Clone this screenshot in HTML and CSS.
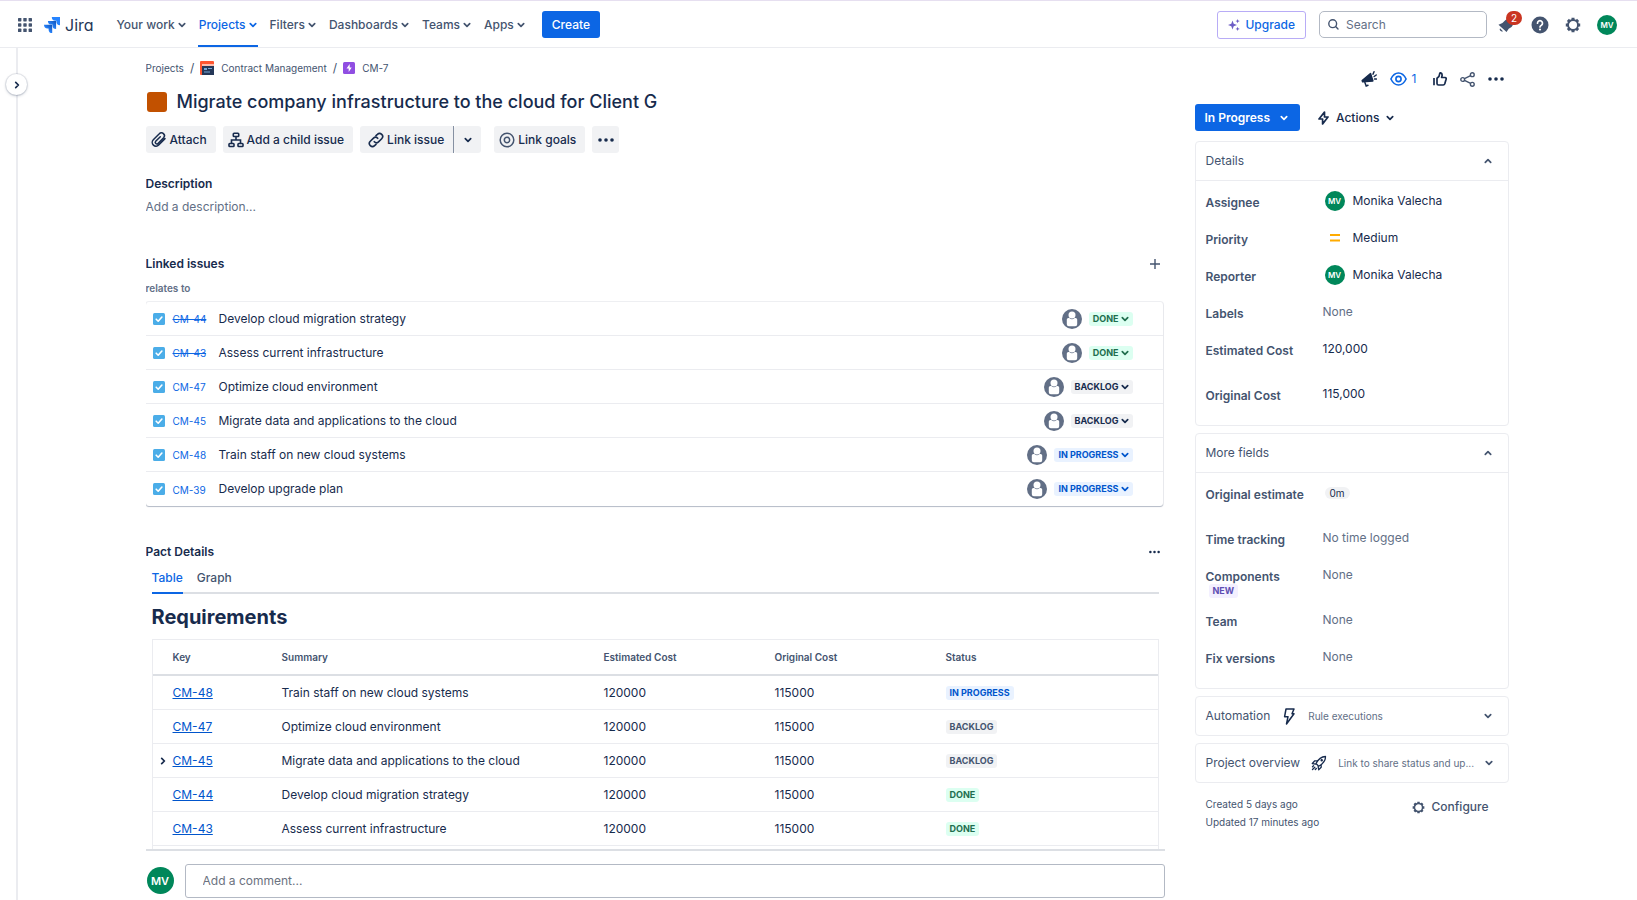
FILE: index.html
```
<!DOCTYPE html>
<html lang="en">

<head>
    <meta charset="UTF-8">
    <meta name="viewport" content="width=device-width, initial-scale=1.0">
    <title>CM-7 Migrate company infrastructure to the cloud for Client G</title>
    <link rel="stylesheet" href="styles.css">
</head>

<body>
    <!-- Shared icons -->
    <svg class="sprite" aria-hidden="true">
        <symbol id="chevron" viewBox="0 0 8 8">
            <path d="M1.3 2.7 4 5.400 6.700 2.700" fill="none" stroke="currentColor" stroke-width="1.7" stroke-linecap="round" stroke-linejoin="round" />
        </symbol>
        <symbol id="dots" viewBox="0 0 16 4">
            <circle cx="2" cy="2" r="1.8" fill="currentColor" />
            <circle cx="8" cy="2" r="1.8" fill="currentColor" />
            <circle cx="14" cy="2" r="1.8" fill="currentColor" />
        </symbol>
        <symbol id="gear" viewBox="0 0 16 16">
            <circle cx="8" cy="8" r="5" fill="none" stroke="currentColor" stroke-width="1.9" />
            <g stroke="currentColor" stroke-width="3">
                <path d="M8 .8V3M8 13v2.200M.8 8H3M13 8h2.200M2.900 2.900l1.600 1.600M11.500 11.500l1.600 1.600M13.100 2.900l-1.600 1.600M4.500 11.500l-1.600 1.600" />
            </g>
        </symbol>
        <symbol id="task" viewBox="0 0 12 12">
            <rect width="12" height="12" rx="1.5" fill="#4bade8" />
            <path d="M3.2 6.2 5.2 8.2 8.9 4" fill="none" stroke="#fff" stroke-width="1.6" stroke-linecap="round" stroke-linejoin="round" />
        </symbol>
        <symbol id="person" viewBox="0 0 20 20">
            <circle cx="10" cy="10" r="10" fill="#626f86" />
            <circle cx="10" cy="6" r="3.5" fill="#fff" />
            <path d="M4.8 10.6q0-1.6 1.6-1.6h.9a4 4 0 0 0 5.4 0h.9q1.6 0 1.6 1.6v4.6q0 2-2 2H6.800q-2 0-2-2z" fill="#fff" />
        </symbol>
    </svg>

    <header class="navbar">
        <button class="icon-btn" aria-label="Switch to">
            <svg width="14" height="14" viewBox="0 0 14 14" fill="currentColor">
                <rect width="3.4" height="3.4" rx=".6" /><rect x="5.3" width="3.4" height="3.4" rx=".6" /><rect x="10.6" width="3.4" height="3.4" rx=".6" />
                <rect y="5.3" width="3.4" height="3.4" rx=".6" /><rect x="5.3" y="5.3" width="3.4" height="3.4" rx=".6" /><rect x="10.6" y="5.3" width="3.4" height="3.4" rx=".6" />
                <rect y="10.6" width="3.4" height="3.4" rx=".6" /><rect x="5.3" y="10.6" width="3.4" height="3.4" rx=".6" /><rect x="10.6" y="10.6" width="3.4" height="3.4" rx=".6" />
            </svg>
        </button>
        <a class="logo" href="#">
            <svg width="16" height="16" viewBox="0 0 16 16">
                <defs>
                    <linearGradient id="fold" x1="1" y1="0" x2="0" y2="1">
                        <stop offset=".1" stop-color="#1558bc" />
                        <stop offset=".6" stop-color="#2684ff" />
                    </linearGradient>
                </defs>
                <path d="M7.8 0H16v8.2a3.6 3.6 0 0 1-3.6-3.6V3.7h-1A3.6 3.6 0 0 1 7.8 0z" fill="#2684ff" />
                <path d="M3.9 3.9h8.2v8.2a3.6 3.6 0 0 1-3.6-3.6v-1h-1a3.6 3.6 0 0 1-3.6-3.6z" fill="url(#fold)" />
                <path d="M0 7.8h8.2V16a3.6 3.6 0 0 1-3.6-3.6v-1h-1A3.6 3.6 0 0 1 0 7.8z" fill="url(#fold)" />
            </svg>
            <span>Jira</span>
        </a>
        <nav class="menu">
            <button>Your work <svg class="chev"><use href="#chevron" /></svg></button>
            <button class="active">Projects <svg class="chev"><use href="#chevron" /></svg></button>
            <button>Filters <svg class="chev"><use href="#chevron" /></svg></button>
            <button>Dashboards <svg class="chev"><use href="#chevron" /></svg></button>
            <button>Teams <svg class="chev"><use href="#chevron" /></svg></button>
            <button>Apps <svg class="chev"><use href="#chevron" /></svg></button>
        </nav>
        <button class="create">Create</button>

        <div class="tools">
            <button class="upgrade">
                <svg width="12" height="12" viewBox="0 0 12 12" fill="#6e5dc6">
                    <path d="M4.5 1.5 5.7 4.8 9 6 5.7 7.2 4.5 10.5 3.3 7.2 0 6l3.3-1.2z" />
                    <path d="M9.6 0l.6 1.5 1.6.6-1.6.6-.6 1.5L9 2.7l-1.5-.6L9 1.5zM9.6 7.8l.6 1.5 1.6.6-1.6.6-.6 1.5-.6-1.5-1.5-.6L9 9.3z" />
                </svg>
                Upgrade
            </button>
            <label class="search">
                <svg width="11" height="11" viewBox="0 0 11 11" fill="none" stroke="currentColor" stroke-width="1.4" stroke-linecap="round">
                    <circle cx="4.7" cy="4.7" r="3.9" /><path d="M7.6 7.6 10 10" />
                </svg>
                <input type="search" placeholder="Search" aria-label="Search">
            </label>
            <button class="icon-btn bell" aria-label="Notifications">
                <svg width="18" height="18" viewBox="0 0 18 18" fill="currentColor">
                    <path d="M1.500 8.800Q6 7.500 8 4.500a4.600 4.600 0 0 1 6.500 6.500Q11.500 12 9.500 16z" />
                    <path d="M3 12.200a2.200 2.200 0 0 0 3 3z" />
                </svg>
                <span class="count">2</span>
            </button>
            <button class="icon-btn" aria-label="Help">
                <svg width="18" height="18" viewBox="0 0 18 18">
                    <circle cx="9" cy="9" r="8.5" fill="currentColor" />
                    <path d="M6.5 7.2a2.5 2.5 0 1 1 3.9 2.1Q9 10.2 9 11" fill="none" stroke="#fff" stroke-width="1.7" stroke-linecap="round" />
                    <circle cx="9" cy="13.5" r="1.1" fill="#fff" />
                </svg>
            </button>
            <button class="icon-btn" aria-label="Settings">
                <svg width="16" height="16"><use href="#gear" /></svg>
            </button>
            <button class="avatar" aria-label="Your profile">MV</button>
        </div>
    </header>

    <div class="layout">
        <aside class="rail">
            <button class="expand" aria-label="Expand sidebar"><svg class="chev right"><use href="#chevron" /></svg></button>
        </aside>

        <div class="issue">
            <main class="content">
                <div class="scroll">
                    <nav class="breadcrumb">
                        <a href="#">Projects</a>
                        <span>/</span>
                        <a href="#">
                            <svg width="14" height="14" viewBox="0 0 14 14">
                                <rect width="14" height="14" rx="1" fill="#ff5630" />
                                <path d="M2 3h12v11H2z" fill="#253858" /><path d="M2 3h12v2H2z" fill="#ffbdad" />
                                <path d="M4 7h3v2H4zM8 7h4v1H8zM4 10.5h6v1H4z" fill="#79a8d8" />
                            </svg>
                            Contract Management
                        </a>
                        <span>/</span>
                        <a href="#">
                            <svg width="12" height="12" viewBox="0 0 12 12">
                                <rect width="12" height="12" rx="1.5" fill="#904ee2" />
                                <path d="M6.7 2 3.5 6.4h2.2V10l3-4.4h-2z" fill="#fff" />
                            </svg>
                            CM-7
                        </a>
                    </nav>

                    <h1><span class="color-box"></span>Migrate company infrastructure to the cloud for Client G</h1>

                    <div class="toolbar">
                        <button>
                            <svg width="16" height="16" viewBox="0 0 16 16" fill="none" stroke="currentColor" stroke-width="1.5" stroke-linecap="round">
                                <path d="M14 6.6 7.7 13a3.7 3.7 0 0 1-5.4-5.2l6-6a2.900 2.900 0 0 1 4.300 4L7 11.400a1.500 1.500 0 0 1-2.300-2.100L9.300 4.800" />
                            </svg>
                            Attach
                        </button>
                        <button>
                            <svg width="16" height="16" viewBox="0 0 16 16" fill="none" stroke="currentColor" stroke-width="1.6">
                                <rect x="5.3" y="1.3" width="5.4" height="3.2" rx=".8" />
                                <rect x="1" y="11.5" width="5" height="3" rx=".8" /><rect x="10" y="11.5" width="5" height="3" rx=".8" />
                                <path d="M8 4.5V8M3.5 11.5V8h9v3.5" />
                            </svg>
                            Add a child issue
                        </button>
                        <div class="split">
                            <button>
                                <svg width="16" height="16" viewBox="0 0 16 16" fill="none" stroke="currentColor" stroke-width="1.6" stroke-linecap="round">
                                    <path d="M6.3 9.7a3 3 0 0 0 4.2.2l3.2-3.2a3 3 0 0 0-4.3-4.3L8 3.7" />
                                    <path d="M9.7 6.3a3 3 0 0 0-4.2-.2L2.3 9.3a3 3 0 0 0 4.3 4.3L8 12.3" />
                                </svg>
                                Link issue
                            </button>
                            <button aria-label="More link options"><svg class="chev"><use href="#chevron" /></svg></button>
                        </div>
                        <button>
                            <svg width="16" height="16" viewBox="0 0 16 16" fill="none" stroke="#44546f" stroke-width="1.5">
                                <circle cx="8" cy="8" r="6.8" /><circle cx="8" cy="8" r="2.7" />
                            </svg>
                            Link goals
                        </button>
                        <button class="more" aria-label="More actions"><svg width="16" height="4"><use href="#dots" /></svg></button>
                    </div>

                    <h2>Description</h2>
                    <p class="placeholder">Add a description...</p>

                    <div class="section-head">
                        <h2>Linked issues</h2>
                        <button class="icon-btn" aria-label="Link an issue">
                            <svg width="10" height="10" viewBox="0 0 10 10" stroke="currentColor" stroke-width="1.4"><path d="M5 0v10M0 5h10" /></svg>
                        </button>
                    </div>
                    <h3>relates to</h3>
                    <ul class="links">
                        <li>
                            <svg class="task"><use href="#task" /></svg>
                            <a class="key closed" href="#">CM-44</a>
                            <span class="summary">Develop cloud migration strategy</span>
                            <svg class="person"><use href="#person" /></svg>
                            <button class="lozenge done">DONE <svg class="chev"><use href="#chevron" /></svg></button>
                        </li>
                        <li>
                            <svg class="task"><use href="#task" /></svg>
                            <a class="key closed" href="#">CM-43</a>
                            <span class="summary">Assess current infrastructure</span>
                            <svg class="person"><use href="#person" /></svg>
                            <button class="lozenge done">DONE <svg class="chev"><use href="#chevron" /></svg></button>
                        </li>
                        <li>
                            <svg class="task"><use href="#task" /></svg>
                            <a class="key" href="#">CM-47</a>
                            <span class="summary">Optimize cloud environment</span>
                            <svg class="person"><use href="#person" /></svg>
                            <button class="lozenge">BACKLOG <svg class="chev"><use href="#chevron" /></svg></button>
                        </li>
                        <li>
                            <svg class="task"><use href="#task" /></svg>
                            <a class="key" href="#">CM-45</a>
                            <span class="summary">Migrate data and applications to the cloud</span>
                            <svg class="person"><use href="#person" /></svg>
                            <button class="lozenge">BACKLOG <svg class="chev"><use href="#chevron" /></svg></button>
                        </li>
                        <li>
                            <svg class="task"><use href="#task" /></svg>
                            <a class="key" href="#">CM-48</a>
                            <span class="summary">Train staff on new cloud systems</span>
                            <svg class="person"><use href="#person" /></svg>
                            <button class="lozenge progress">IN PROGRESS <svg class="chev"><use href="#chevron" /></svg></button>
                        </li>
                        <li>
                            <svg class="task"><use href="#task" /></svg>
                            <a class="key" href="#">CM-39</a>
                            <span class="summary">Develop upgrade plan</span>
                            <svg class="person"><use href="#person" /></svg>
                            <button class="lozenge progress">IN PROGRESS <svg class="chev"><use href="#chevron" /></svg></button>
                        </li>
                    </ul>

                    <div class="section-head">
                        <h2>Pact Details</h2>
                        <button class="icon-btn dark" aria-label="Pact Details options"><svg width="11" height="4"><use href="#dots" /></svg></button>
                    </div>
                    <div class="pact">
                        <div class="tabs" role="tablist">
                            <button class="active" role="tab" aria-selected="true">Table</button>
                            <button role="tab" aria-selected="false">Graph</button>
                        </div>
                        <h4>Requirements</h4>
                        <table>
                            <thead>
                                <tr>
                                    <th class="col-key">Key</th>
                                    <th class="col-summary">Summary</th>
                                    <th class="col-cost">Estimated Cost</th>
                                    <th class="col-cost">Original Cost</th>
                                    <th>Status</th>
                                </tr>
                            </thead>
                            <tbody>
                                <tr>
                                    <td><a href="#">CM-48</a></td>
                                    <td>Train staff on new cloud systems</td>
                                    <td>120000</td>
                                    <td>115000</td>
                                    <td><span class="lozenge progress">IN PROGRESS</span></td>
                                </tr>
                                <tr>
                                    <td><a href="#">CM-47</a></td>
                                    <td>Optimize cloud environment</td>
                                    <td>120000</td>
                                    <td>115000</td>
                                    <td><span class="lozenge muted">BACKLOG</span></td>
                                </tr>
                                <tr>
                                    <td class="expandable"><button aria-label="Expand CM-45"><svg class="chev right"><use href="#chevron" /></svg></button><a href="#">CM-45</a></td>
                                    <td>Migrate data and applications to the cloud</td>
                                    <td>120000</td>
                                    <td>115000</td>
                                    <td><span class="lozenge muted">BACKLOG</span></td>
                                </tr>
                                <tr>
                                    <td><a href="#">CM-44</a></td>
                                    <td>Develop cloud migration strategy</td>
                                    <td>120000</td>
                                    <td>115000</td>
                                    <td><span class="lozenge done">DONE</span></td>
                                </tr>
                                <tr>
                                    <td><a href="#">CM-43</a></td>
                                    <td>Assess current infrastructure</td>
                                    <td>120000</td>
                                    <td>115000</td>
                                    <td><span class="lozenge done">DONE</span></td>
                                </tr>
                                <tr>
                                    <td colspan="5"></td>
                                </tr>
                            </tbody>
                        </table>
                    </div>
                </div>

                <div class="comment">
                    <span class="avatar large">MV</span>
                    <input type="text" placeholder="Add a comment..." aria-label="Add a comment">
                </div>
            </main>

            <aside class="side">
                <div class="quick">
                    <button class="icon-btn" aria-label="Give feedback">
                        <svg width="16" height="16" viewBox="0 0 16 16" fill="none" stroke="currentColor" stroke-width="1.5" stroke-linecap="round">
                            <path d="M1.2 9.5 9.5 2.6l2.4 7.3-10.300.9z" fill="currentColor" stroke-linejoin="round" />
                            <path d="M3.9 11.5 5.2 15 7 14.2M12 3.2 13 .8M13.2 5.5l2-1.5M13.6 8h1.8" />
                        </svg>
                    </button>
                    <button class="icon-btn watch">
                        <svg width="17" height="14" viewBox="0 0 17 14" fill="none" stroke="currentColor" stroke-width="1.6">
                            <path d="M.9 7Q3.8 1 8.5 1t7.6 6Q13.2 13 8.5 13T.9 7z" /><circle cx="8.5" cy="7" r="2.6" />
                        </svg>
                        1
                    </button>
                    <button class="icon-btn" aria-label="Vote">
                        <svg width="14" height="14" viewBox="0 0 14 14" fill="none" stroke="currentColor" stroke-width="1.7" stroke-linejoin="round">
                            <path d="M1 6v7.3" /><path d="M4 6.3Q6.7 4.5 6.7 1.8q0-1 .9-1 1.7.3 1.5 2.7L8.600 5.500h3.300q1.600.2 1.200 1.800l-1.300 4.500q-.4 1.200-1.600 1.200H5.500Q4 13 4 11.500z" />
                        </svg>
                    </button>
                    <button class="icon-btn share" aria-label="Share">
                        <svg width="15" height="15" viewBox="0 0 15 15" fill="none" stroke="currentColor" stroke-width="1.4">
                            <circle cx="2.7" cy="7.5" r="1.9" /><circle cx="12.3" cy="2.7" r="1.9" /><circle cx="12.3" cy="12.3" r="1.9" />
                            <path d="M4.5 6.6 10.6 3.6M4.5 8.4l6.100 3" />
                        </svg>
                    </button>
                    <button class="icon-btn" aria-label="Actions"><svg width="16" height="4"><use href="#dots" /></svg></button>
                </div>

                <div class="status-bar">
                    <button class="status">In Progress <svg class="chev"><use href="#chevron" /></svg></button>
                    <button class="actions">
                        <svg width="11" height="14" viewBox="0 0 11 14" fill="none" stroke="currentColor" stroke-width="1.7" stroke-linejoin="round">
                            <path d="M6.5 1 1 8h3.6v5L10 6H6.5z" />
                        </svg>
                        Actions <svg class="chev"><use href="#chevron" /></svg>
                    </button>
                </div>

                <section class="panel">
                    <button class="panel-head">Details <svg class="chev up"><use href="#chevron" /></svg></button>
                    <dl>
                        <div><dt>Assignee</dt><dd class="with-icon"><span class="avatar">MV</span>Monika Valecha</dd></div>
                        <div>
                            <dt>Priority</dt>
                            <dd class="with-icon">
                                <svg width="20" height="20" viewBox="0 0 20 20" stroke="#ffab00" stroke-width="1.8"><path d="M5 7h10M5 12.5h10" /></svg>Medium
                            </dd>
                        </div>
                        <div><dt>Reporter</dt><dd class="with-icon"><span class="avatar">MV</span>Monika Valecha</dd></div>
                        <div><dt>Labels</dt><dd class="none">None</dd></div>
                        <div class="tall"><dt>Estimated Cost</dt><dd>120,000</dd></div>
                        <div><dt>Original Cost</dt><dd>115,000</dd></div>
                    </dl>
                </section>

                <section class="panel">
                    <button class="panel-head">More fields <svg class="chev up"><use href="#chevron" /></svg></button>
                    <dl>
                        <div class="tall"><dt>Original estimate</dt><dd><span class="pill">0m</span></dd></div>
                        <div><dt>Time tracking</dt><dd class="none">No time logged</dd></div>
                        <div class="tall"><dt>Components <span class="lozenge new">NEW</span></dt><dd class="none">None</dd></div>
                        <div><dt>Team</dt><dd class="none">None</dd></div>
                        <div><dt>Fix versions</dt><dd class="none">None</dd></div>
                    </dl>
                </section>

                <section class="panel">
                    <button class="panel-head">
                        Automation
                        <svg width="16" height="17" viewBox="2 0 16 17" fill="none" stroke="#172b4d" stroke-width="1.5" stroke-linejoin="round">
                            <path d="M7 1h8l-2 4.700h2L7.5 16 9 8.700H5.600z" />
                        </svg>
                        <small>Rule executions</small>
                        <svg class="chev"><use href="#chevron" /></svg>
                    </button>
                </section>

                <section class="panel">
                    <button class="panel-head">
                        Project overview
                        <svg width="16" height="16" viewBox="0 0 16 16" fill="none" stroke="#172b4d" stroke-width="1.3" stroke-linejoin="round" stroke-linecap="round">
                            <path d="M5 8.500Q8.500 1.800 14.500 1.500 14.500 7.500 7.700 11.200zM6.200 5.800H3.800L1.300 8.500l3.200.6M10.200 9.700v2.600l-2.500 2.400-.6-3M1.500 14.500l2.300-2.300M1.500 11.800l1-1M4.300 14.500l1-1" />
                            <circle cx="10.7" cy="5.3" r=".6" />
                        </svg>
                        <small>Link to share status and up...</small>
                        <svg class="chev"><use href="#chevron" /></svg>
                    </button>
                </section>

                <footer class="meta">
                    <p>Created 5 days ago<br>Updated 17 minutes ago</p>
                    <button class="configure"><svg width="13" height="13"><use href="#gear" /></svg>Configure</button>
                </footer>
            </aside>
        </div>
    </div>
</body>

</html>
```
FILE: styles.css
```
:root {
    --text: #172b4d;
    --text-subtle: #44546f;
    --text-faint: #626f86;
    --blue: #0c66e4;
    --border: #ebecf0;
    --neutral: #f1f2f4;
    --green: #00875a;
}

* {
    box-sizing: border-box;
}

body {
    margin: 0;
    height: 100vh;
    display: flex;
    flex-direction: column;
    overflow: hidden;
    background: #fff;
    color: var(--text);
    font-family: Inter, "Liberation Sans", sans-serif;
    font-size: 12px;
    line-height: 16px;
}

button,
input {
    font: inherit;
    color: inherit;
}

button {
    display: inline-flex;
    align-items: center;
    padding: 0;
    border: none;
    background: none;
    cursor: pointer;
    white-space: nowrap;
}

a {
    color: inherit;
    text-decoration: none;
}

h1, h2, h3, h4, p, ul, dl, dd {
    margin: 0;
    padding: 0;
}

svg {
    flex: none;
}

.sprite {
    display: none;
}

.chev {
    width: 8px;
    height: 8px;
}

.chev.up {
    transform: rotate(180deg);
}

.chev.right {
    transform: rotate(-90deg);
}

.icon-btn {
    color: var(--text-subtle);
}

.icon-btn.dark {
    color: var(--text);
}

.avatar {
    display: inline-flex;
    flex: none;
    align-items: center;
    justify-content: center;
    width: 20px;
    height: 20px;
    border-radius: 50%;
    background: var(--green);
    color: #fff;
    font-size: 8px;
    font-weight: 600;
}

.avatar.large {
    width: 27px;
    height: 27px;
    font-size: 11px;
}

/* Top navigation */
.navbar {
    display: flex;
    align-items: stretch;
    flex: none;
    height: 48px;
    padding: 1px 20px 0 18px;
    border-top: 1px solid #e6dff0;
    border-bottom: 1px solid var(--border);
}

.logo {
    display: flex;
    align-items: center;
    gap: 5px;
    margin: 0 22px 0 12px;
    font-size: 16px;
    font-feature-settings: "cv11";
    color: #253858;
}

.menu {
    display: flex;
    gap: 11px;
}

.menu button {
    gap: 3px;
    padding: 2px 1px 0;
    border-bottom: 2px solid transparent;
    color: var(--text-subtle);
    font-weight: 500;
}

.menu .active {
    color: var(--blue);
    border-bottom-color: var(--blue);
}

.create {
    align-self: center;
    height: 27px;
    margin-left: 16px;
    padding: 0 10px;
    border-radius: 3px;
    background: var(--blue);
    color: #fff;
    font-weight: 500;
}

.tools {
    display: flex;
    align-items: center;
    gap: 16px;
    margin-left: auto;
}

.upgrade {
    gap: 5px;
    height: 28px;
    padding: 0 10px;
    border: 1px solid #b8acf6;
    border-radius: 3px;
    color: var(--blue);
    font-weight: 500;
}

.search {
    display: flex;
    align-items: center;
    gap: 7px;
    width: 168px;
    height: 27px;
    padding: 0 8px;
    margin-left: -3px;
    border: 1px solid #b3b9c4;
    border-radius: 5px;
    color: var(--text-subtle);
}

.search input {
    width: 100%;
    padding: 0;
    border: none;
    outline: none;
}

.search input::placeholder {
    color: var(--text-faint);
}

.bell {
    position: relative;
    margin-left: -6px;
}

.count {
    position: absolute;
    top: -5px;
    left: 9px;
    width: 16px;
    height: 14px;
    border-radius: 7px;
    background: #ca3521;
    color: #fff;
    font-size: 10px;
    line-height: 14px;
}

/* Page layout */
.layout {
    display: flex;
    flex: 1;
    min-height: 0;
}

.rail {
    flex: none;
    width: 18px;
    border-right: 2px solid var(--border);
}

.expand {
    position: relative;
    left: 6px;
    justify-content: center;
    width: 21px;
    height: 21px;
    margin-top: 26px;
    border-radius: 50%;
    background: #fff;
    box-shadow: 0 0 0 1px #091e4214, 0 1px 3px #091e4240;
}

.issue {
    display: flex;
    flex: 1;
    gap: 30px;
    min-width: 0;
    max-width: 1364px;
    margin: 0 auto;
    padding-right: 1px;
}

.content {
    display: flex;
    flex: 1;
    flex-direction: column;
    min-width: 0;
}

.scroll {
    flex: 1;
    overflow: hidden;
    padding: 12px 2px 0 0;
}

.breadcrumb {
    display: flex;
    gap: 6px;
    color: var(--text-subtle);
    font-size: 10px;
}

.breadcrumb span {
    font-size: 12px;
}

.breadcrumb a {
    display: flex;
    align-items: center;
    gap: 7px;
}

h1 {
    display: flex;
    align-items: center;
    gap: 10px;
    margin: 14px 0 12px 1px;
    font-size: 18px;
    font-weight: 500;
    line-height: 24px;
}

.color-box {
    width: 20px;
    height: 20px;
    border-radius: 3px;
    background: #c25100;
}

.toolbar {
    display: flex;
    gap: 7px;
    margin-bottom: 23px;
}

.toolbar button {
    gap: 3px;
    height: 27px;
    padding: 0 9px 0 5px;
    border-radius: 3px;
    background: var(--neutral);
    font-weight: 500;
}

.split {
    display: flex;
    margin-right: 6px;
}

.split button:first-child {
    padding-left: 8px;
    border-right: 1px solid #8590a2;
    border-radius: 3px 0 0 3px;
}

.split button:last-child,
.toolbar .more {
    justify-content: center;
    width: 27px;
    padding: 0;
}

h2 {
    font-size: 12px;
    font-weight: 600;
    line-height: 16px;
}

.placeholder {
    margin: 7px 0 41px;
    color: var(--text-faint);
}

.section-head {
    display: flex;
    justify-content: space-between;
    padding-right: 3px;
}

h3 {
    margin: 8px 0 6px;
    color: var(--text-faint);
    font-size: 10px;
    font-weight: 600;
    line-height: 16px;
}

.links {
    margin-bottom: 38px;
    border-radius: 3px;
    box-shadow: 0 0 0 1px #091e4212, 0 1px 1px #091e4240;
    list-style: none;
}

.links li {
    display: flex;
    align-items: center;
    height: 34px;
    padding: 0 30px 0 7px;
    border-bottom: 1px solid var(--border);
}

.links li:last-child {
    border-bottom: none;
}

.task {
    width: 12px;
    height: 12px;
}

.key {
    width: 46px;
    margin-left: 8px;
    padding-top: 1px;
    color: var(--blue);
    font-size: 10px;
}

.key.closed {
    text-decoration: line-through;
}

.summary {
    flex: 1;
}

.person {
    width: 20px;
    height: 20px;
    margin-right: 7px;
}

.lozenge {
    display: inline-flex;
    gap: 2px;
    height: 14px;
    padding: 0 4px;
    border-radius: 3px;
    background: var(--neutral);
    font-size: 9px;
    font-weight: 700;
    line-height: 14px;
}

.lozenge.done {
    background: #dcfff1;
    color: #216e4e;
}

.lozenge.progress {
    background: #e9f2ff;
    color: #0055cc;
}

.lozenge.new {
    background: #f3f0ff;
    color: #5e4db2;
}

.lozenge.muted {
    color: var(--text-subtle);
}

.pact {
    margin: 4px 4px 0 6px;
}

.tabs {
    display: flex;
    gap: 14px;
    border-bottom: 2px solid #dcdfe4;
}

.tabs button {
    height: 30px;
    margin-bottom: -2px;
    border-bottom: 2px solid transparent;
    color: var(--text-subtle);
    font-weight: 500;
}

.tabs .active {
    color: var(--blue);
    border-bottom-color: var(--blue);
}

h4 {
    margin: 10px 0 9px;
    font-size: 20px;
    font-weight: 700;
    line-height: 26px;
}

table {
    width: 100%;
    table-layout: fixed;
    border: 1px solid var(--border);
    border-collapse: separate;
    border-spacing: 0;
}

th,
td {
    height: 34px;
    padding: 0;
    border-bottom: 1px solid var(--border);
    text-align: left;
}

th {
    height: 36px;
    border-bottom: 2px solid #dcdfe4;
    color: var(--text-subtle);
    font-size: 10px;
    font-weight: 600;
}

th:first-child,
td:first-child {
    padding-left: 20px;
}

td a {
    color: #0055cc;
    text-decoration: underline;
}

.col-key {
    width: 129px;
}

.col-summary {
    width: 322px;
}

.col-cost {
    width: 171px;
}

td .lozenge {
    vertical-align: middle;
}

td.expandable:first-child {
    padding-left: 6px;
}

.expandable button {
    width: 14px;
}

.comment {
    display: flex;
    align-items: center;
    gap: 11px;
    flex: none;
    height: 51px;
    padding: 10px 0 0 1px;
    border-top: 2px solid #dcdfe4;
}

.comment input {
    flex: 1;
    height: 34px;
    padding: 0 17px;
    border: 1px solid #b3b9c4;
    border-radius: 3px;
}

.comment input::placeholder {
    color: #6b7280;
}

/* Right column */
.side {
    flex: none;
    width: 314px;
    padding-top: 22px;
}

.quick {
    display: flex;
    align-items: center;
    justify-content: flex-end;
    gap: 13px;
    height: 18px;
    margin: 0 5px 16px 0;
}

.quick .icon-btn {
    color: var(--text);
}

.quick .share {
    color: var(--text-subtle);
}

.quick .watch {
    gap: 5px;
    margin-right: 3px;
    color: var(--blue);
}

.status-bar {
    display: flex;
    gap: 18px;
    margin-bottom: 10px;
}

.status-bar button {
    height: 27px;
    font-weight: 500;
}

.status {
    gap: 10px;
    padding: 0 12px 0 10px;
    border-radius: 3px;
    background: var(--blue);
    color: #fff;
}

.status-bar .status {
    font-weight: 600;
}

.actions {
    gap: 7px;
}

.panel {
    margin-bottom: 7px;
    border: 1px solid var(--border);
    border-radius: 4px;
}

.panel-head {
    display: flex;
    width: 100%;
    height: 38px;
    padding: 0 16px 0 10px;
    gap: 11px;
    color: var(--text-subtle);
}

.panel-head .chev {
    margin-left: auto;
}

.panel-head small {
    color: var(--text-faint);
    font-size: 10px;
}

dl {
    padding: 3px 10px 11px;
    border-top: 1px solid var(--border);
}

dl div {
    display: flex;
    height: 37px;
}

dl .tall {
    height: 45px;
}

dt {
    width: 117px;
    padding-top: 11px;
    color: var(--text-subtle);
    font-weight: 600;
    line-height: 15px;
}

dt .lozenge {
    display: table;
    margin-left: 3px;
}

dd {
    height: 34px;
    line-height: 34px;
}

.with-icon {
    display: flex;
    align-items: center;
    gap: 8px;
    padding-left: 2px;
}

.none {
    color: var(--text-faint);
}

.pill {
    margin-left: 2px;
    padding: 0 5px;
    border-radius: 8px;
    background: var(--neutral);
    font-size: 10px;
}

.meta {
    display: flex;
    justify-content: space-between;
    padding: 5px 20px 0 11px;
    color: var(--text-subtle);
    font-size: 10px;
    line-height: 18px;
}

.configure {
    gap: 7px;
    height: 24px;
    font-size: 12px;
    font-weight: 500;
}
```
